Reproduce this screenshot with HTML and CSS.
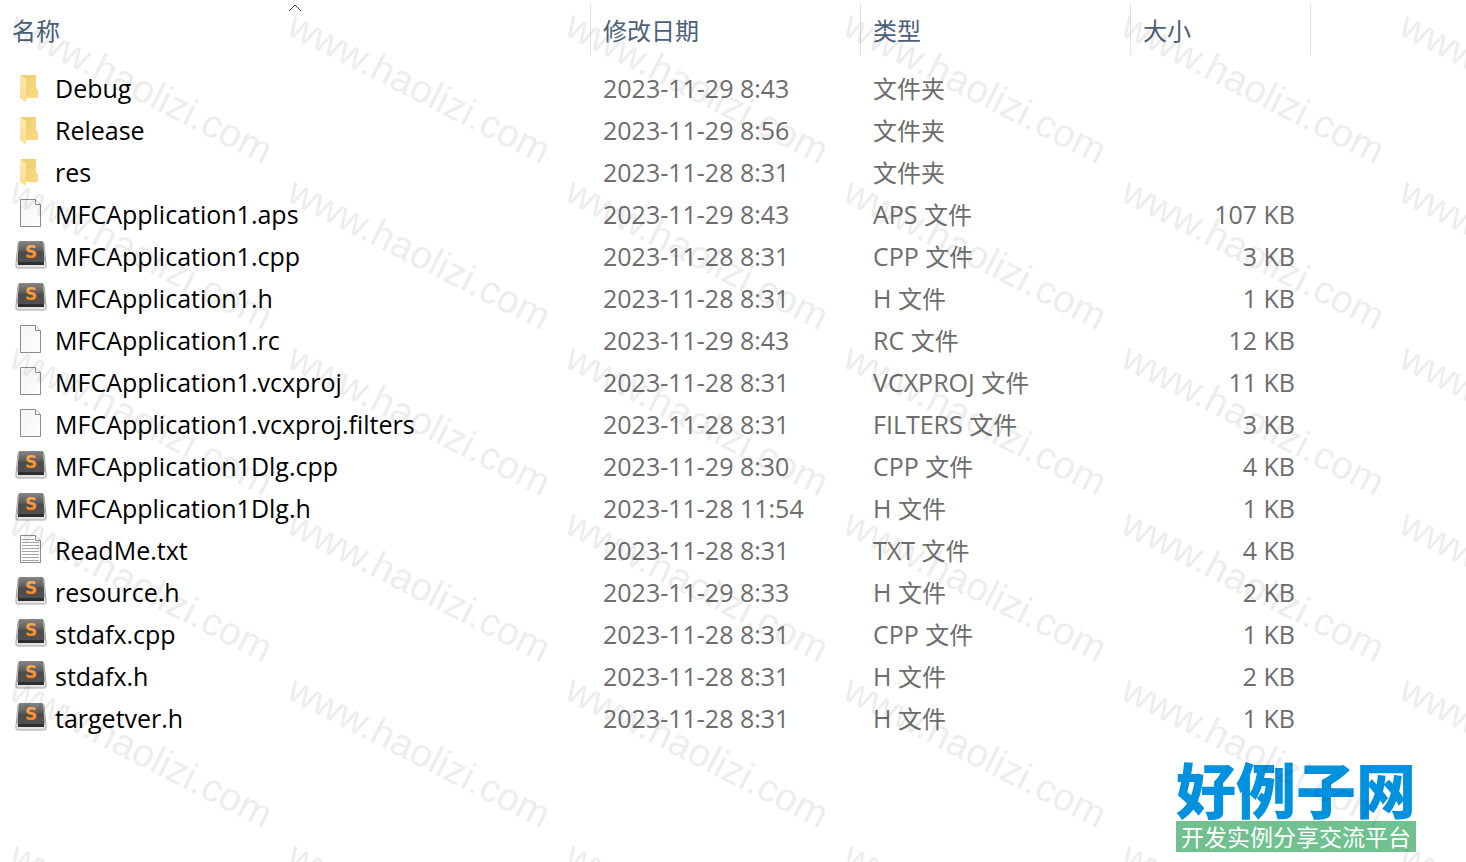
FILE: index.html
```html
<!DOCTYPE html>
<html lang="zh-CN">
<head>
    <meta charset="UTF-8">
    <title>MFCApplication1</title>
    <link rel="stylesheet" href="styles.css">
</head>
<body>
    <!-- 图标定义 -->
    <svg class="defs" aria-hidden="true">
        <defs>
            <linearGradient id="folder-back" x1="0" y1="0" x2="1" y2="1">
                <stop offset="0" stop-color="#efcb6e"/>
                <stop offset="1" stop-color="#fbdc86"/>
            </linearGradient>
            <linearGradient id="folder-front" x1="0" y1="0" x2="0" y2="1">
                <stop offset="0" stop-color="#ffeab0"/>
                <stop offset="1" stop-color="#fbdc88"/>
            </linearGradient>
            <linearGradient id="page-fill" x1="0" y1="0" x2="1" y2="1">
                <stop offset="0" stop-color="#f3f5f5"/>
                <stop offset="1" stop-color="#fdfefe"/>
            </linearGradient>
            <linearGradient id="key-top" x1="0" y1="0" x2="0" y2="1">
                <stop offset="0" stop-color="#858585"/>
                <stop offset="0.45" stop-color="#5c5c5c"/>
                <stop offset="0.5" stop-color="#4c4c4c"/>
                <stop offset="1" stop-color="#505050"/>
            </linearGradient>
            <linearGradient id="key-letter" x1="0" y1="0" x2="0" y2="1">
                <stop offset="0" stop-color="#ffb25c"/>
                <stop offset="1" stop-color="#ff7a14"/>
            </linearGradient>
        </defs>
        <symbol id="icon-folder" viewBox="0 0 32 32">
            <path d="M6 3h15v13l2 2v8H6z" fill="url(#folder-back)"/>
            <path d="M5 3l6 4v23l-6-4z" fill="url(#folder-front)"/>
        </symbol>
        <symbol id="icon-file" viewBox="0 0 32 32">
            <path d="M5.500 1.500h15l5 5v22h-20z" fill="url(#page-fill)" stroke="#8c8c8c"/>
            <path d="M20.500 1.500v5h5" fill="#fff" stroke="#8c8c8c"/>
        </symbol>
        <symbol id="icon-text" viewBox="0 0 32 32">
            <path d="M5.500 1.500h15l5 5v22h-20z" fill="#fcfcfc" stroke="#8c8c8c"/>
            <path d="M20.500 1.500v5h5" fill="#fff" stroke="#8c8c8c"/>
            <path d="M7 5.500h12M7 8.500h17M7 11.500h17M7 14.500h17M7 17.500h17M7 20.500h17M7 23.500h17M7 26.500h17" stroke="#a6a6a6"/>
        </symbol>
        <symbol id="icon-sublime" viewBox="0 0 32 32">
            <path d="M5 1.500h22q1.500 0 2 2l2 20v3q0 1.500-1.500 1.500h-27q-1.500 0-1.500-1.500v-3l2-20q.3-2 2-2z" fill="#e4e4e4" stroke="#a6a6a6"/>
            <path d="M5.500 1h21q1.500 0 1.800 2l1.200 18q0 2-2 2h-23q-2 0-2-2l1.200-18q.3-2 1.800-2z" fill="url(#key-top)"/>
            <path d="M3 22h26v3h-26z" fill="#2e2e2e"/>
            <text x="16" y="18" class="key-letter" fill="url(#key-letter)">S</text>
        </symbol>
    </svg>

    <main class="file-list">
        <table>
            <colgroup>
                <col>
                <col class="col-date">
                <col class="col-type">
                <col class="col-size">
            </colgroup>
            <thead>
                <tr>
                    <th aria-sort="ascending">
                        <button type="button">名称</button>
                        <svg class="sort-arrow" viewBox="0 0 14 8"><path d="M1 7l6-6 6 6" fill="none" stroke="#444"/></svg>
                    </th>
                    <th><button type="button">修改日期</button></th>
                    <th><button type="button">类型</button></th>
                    <th><button type="button">大小</button></th>
                </tr>
            </thead>
            <tbody>
                <tr>
                    <td class="name"><div><svg><use href="#icon-folder"/></svg>Debug</div></td>
                    <td>2023-11-29 8:43</td>
                    <td><span class="zh">文件夹</span></td>
                    <td class="size"></td>
                </tr>
                <tr>
                    <td class="name"><div><svg><use href="#icon-folder"/></svg>Release</div></td>
                    <td>2023-11-29 8:56</td>
                    <td><span class="zh">文件夹</span></td>
                    <td class="size"></td>
                </tr>
                <tr>
                    <td class="name"><div><svg><use href="#icon-folder"/></svg>res</div></td>
                    <td>2023-11-28 8:31</td>
                    <td><span class="zh">文件夹</span></td>
                    <td class="size"></td>
                </tr>
                <tr>
                    <td class="name"><div><svg><use href="#icon-file"/></svg>MFCApplication1.aps</div></td>
                    <td>2023-11-29 8:43</td>
                    <td>APS <span class="zh">文件</span></td>
                    <td class="size">107 KB</td>
                </tr>
                <tr>
                    <td class="name"><div><svg><use href="#icon-sublime"/></svg>MFCApplication1.cpp</div></td>
                    <td>2023-11-28 8:31</td>
                    <td>CPP <span class="zh">文件</span></td>
                    <td class="size">3 KB</td>
                </tr>
                <tr>
                    <td class="name"><div><svg><use href="#icon-sublime"/></svg>MFCApplication1.h</div></td>
                    <td>2023-11-28 8:31</td>
                    <td>H <span class="zh">文件</span></td>
                    <td class="size">1 KB</td>
                </tr>
                <tr>
                    <td class="name"><div><svg><use href="#icon-file"/></svg>MFCApplication1.rc</div></td>
                    <td>2023-11-29 8:43</td>
                    <td>RC <span class="zh">文件</span></td>
                    <td class="size">12 KB</td>
                </tr>
                <tr>
                    <td class="name"><div><svg><use href="#icon-file"/></svg>MFCApplication1.vcxproj</div></td>
                    <td>2023-11-28 8:31</td>
                    <td>VCXPROJ <span class="zh">文件</span></td>
                    <td class="size">11 KB</td>
                </tr>
                <tr>
                    <td class="name"><div><svg><use href="#icon-file"/></svg>MFCApplication1.vcxproj.filters</div></td>
                    <td>2023-11-28 8:31</td>
                    <td>FILTERS <span class="zh">文件</span></td>
                    <td class="size">3 KB</td>
                </tr>
                <tr>
                    <td class="name"><div><svg><use href="#icon-sublime"/></svg>MFCApplication1Dlg.cpp</div></td>
                    <td>2023-11-29 8:30</td>
                    <td>CPP <span class="zh">文件</span></td>
                    <td class="size">4 KB</td>
                </tr>
                <tr>
                    <td class="name"><div><svg><use href="#icon-sublime"/></svg>MFCApplication1Dlg.h</div></td>
                    <td>2023-11-28 11:54</td>
                    <td>H <span class="zh">文件</span></td>
                    <td class="size">1 KB</td>
                </tr>
                <tr>
                    <td class="name"><div><svg><use href="#icon-text"/></svg>ReadMe.txt</div></td>
                    <td>2023-11-28 8:31</td>
                    <td>TXT <span class="zh">文件</span></td>
                    <td class="size">4 KB</td>
                </tr>
                <tr>
                    <td class="name"><div><svg><use href="#icon-sublime"/></svg>resource.h</div></td>
                    <td>2023-11-29 8:33</td>
                    <td>H <span class="zh">文件</span></td>
                    <td class="size">2 KB</td>
                </tr>
                <tr>
                    <td class="name"><div><svg><use href="#icon-sublime"/></svg>stdafx.cpp</div></td>
                    <td>2023-11-28 8:31</td>
                    <td>CPP <span class="zh">文件</span></td>
                    <td class="size">1 KB</td>
                </tr>
                <tr>
                    <td class="name"><div><svg><use href="#icon-sublime"/></svg>stdafx.h</div></td>
                    <td>2023-11-28 8:31</td>
                    <td>H <span class="zh">文件</span></td>
                    <td class="size">2 KB</td>
                </tr>
                <tr>
                    <td class="name"><div><svg><use href="#icon-sublime"/></svg>targetver.h</div></td>
                    <td>2023-11-28 8:31</td>
                    <td>H <span class="zh">文件</span></td>
                    <td class="size">1 KB</td>
                </tr>
            </tbody>
        </table>
    </main>

    <footer>
        <div class="site-logo">
            <div class="site-name">好例子网</div>
            <div class="site-slogan">开发实例分享交流平台</div>
        </div>
    </footer>

    <!-- 水印 -->
    <svg class="watermark" aria-hidden="true">
        <defs>
            <pattern id="mark" y="8" width="278" height="166" patternUnits="userSpaceOnUse">
                <text transform="translate(7 26) rotate(27)">www.haolizi.com</text>
            </pattern>
        </defs>
        <rect width="100%" height="100%" fill="url(#mark)"/>
    </svg>
</body>
</html>
```
FILE: styles.css
```css
* {
    box-sizing: border-box;
}
body {
    position: relative;
    min-height: 100vh;
    margin: 0;
    background-color: #fff;
    color: #6d6d6d;
    font-family: "Open Sans", "Noto Sans CJK SC", sans-serif;
    font-size: 25px;
    line-height: 40px;
    overflow-x: hidden;
}
.defs {
    position: absolute;
    width: 0;
    height: 0;
}

/* 文件列表 */
.file-list {
    padding: 4px 155px 0 0;
}
table {
    width: 100%;
    table-layout: fixed;
    border-collapse: separate;
    border-spacing: 0;
    white-space: nowrap;
}
.col-date, .col-type {
    width: 270px;
}
.col-size {
    width: 180px;
}
th {
    position: relative;
    height: 51px;
    padding: 0 0 0 12px;
    border-right: 1px solid #e2e2e2;
    text-align: left;
}
th button {
    display: block;
    width: 100%;
    height: 51px;
    padding: 0;
    border: none;
    background: none;
    color: #4c607a;
    font-family: "Noto Sans CJK SC", sans-serif;
    font-size: 24px;
    line-height: 51px;
    text-align: left;
}
.sort-arrow {
    position: absolute;
    top: 0;
    left: calc(50% - 7px);
    width: 14px;
    height: 8px;
}
tbody::before {
    content: "";
    display: block;
    height: 12px;
}
td {
    height: 42px;
    padding: 0 0 0 12px;
    vertical-align: middle;
}
td.name {
    padding-left: 15px;
    color: #000;
}
td.name div {
    display: flex;
    align-items: center;
    gap: 8px;
}
td.name svg {
    flex: none;
    width: 32px;
    height: 32px;
}
td.size {
    padding-right: 16px;
    text-align: right;
}
.zh {
    font-size: 24px;
}
.key-letter {
    font-family: "DejaVu Sans", sans-serif;
    font-size: 17px;
    font-weight: bold;
    text-anchor: middle;
}

/* 右下角标志 */
footer {
    display: flex;
    justify-content: flex-end;
    padding: 15px 50px 10px 0;
}
.site-logo {
    width: 240px;
    font-family: "Noto Sans CJK SC", sans-serif;
    text-align: center;
    white-space: nowrap;
}
.site-name {
    color: #0091df;
    font-size: 60px;
    font-weight: 900;
    line-height: 67px;
}
.site-slogan {
    background-color: #70c18f;
    color: #fff;
    font-size: 23px;
    line-height: 31px;
}

.watermark {
    position: absolute;
    top: 0;
    left: 0;
    width: 100%;
    height: 100%;
    pointer-events: none;
}
.watermark text {
    fill: rgba(0, 0, 0, 0.07);
    font-family: "Liberation Sans", Arial, sans-serif;
    font-size: 39px;
}
```
